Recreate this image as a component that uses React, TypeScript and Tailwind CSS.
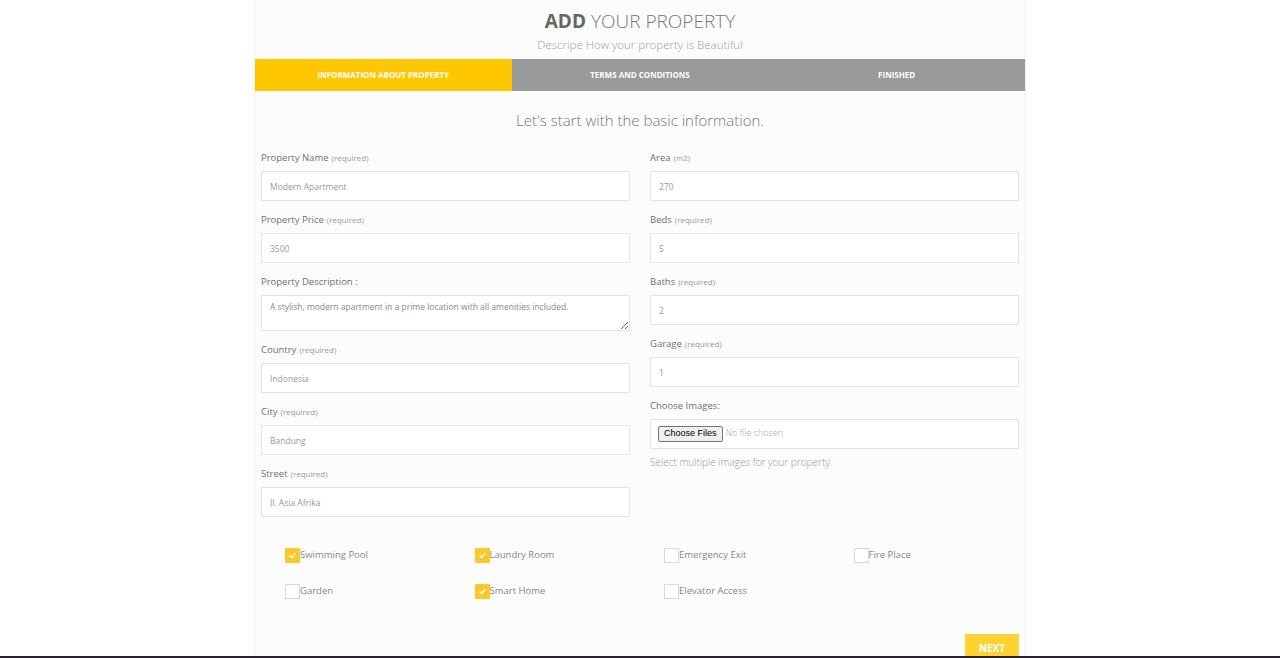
import React from "react";

const fields = {
	left: [
		{ label: "Property Name", hint: "(required)", value: "Modern Apartment" },
		{ label: "Property Price", hint: "(required)", value: "3500" },
		{ label: "Property Description :", hint: "", value: "A stylish, modern apartment in a prime location with all amenities included.", area: true },
		{ label: "Country", hint: "(required)", value: "Indonesia" },
		{ label: "City", hint: "(required)", value: "Bandung" },
		{ label: "Street", hint: "(required)", value: "Jl. Asia Afrika" },
	],
	right: [
		{ label: "Area", hint: "(m2)", value: "270" },
		{ label: "Beds", hint: "(required)", value: "5" },
		{ label: "Baths", hint: "(required)", value: "2" },
		{ label: "Garage", hint: "(required)", value: "1" },
	],
};

const features = [
	{ name: "Swimming Pool", checked: true },
	{ name: "Laundry Room", checked: true },
	{ name: "Emergency Exit", checked: false },
	{ name: "Fire Place", checked: false },
	{ name: "Garden", checked: false },
	{ name: "Smart Home", checked: true },
	{ name: "Elevator Access", checked: false },
];

type Field = { label: string; hint: string; value: string; area?: boolean };

const FormField = ({ f }: { f: Field }) => {
	return (
		<div className="flex flex-col mb-[12px]">
			<label className="h-[14px] flex items-baseline gap-[3px] text-[9.5px] leading-[14px] text-[#707070] mb-[6px]">
				{f.label} {f.hint && <span className="text-[8px] leading-[14px] text-[#999]">{f.hint}</span>}
			</label>
			{f.area ? (
				<textarea
					className="h-[36px] bg-white border border-[#e3e3e3] px-[8px] py-[5px] text-[8.5px] leading-[12px] text-[#888] outline-none"
					defaultValue={f.value}
				/>
			) : (
				<input
					className="h-[30px] bg-white border border-[#e3e3e3] px-[8px] text-[8.5px] text-[#999] outline-none"
					defaultValue={f.value}
				/>
			)}
		</div>
	);
};

const CheckBox = ({ name, checked }: { name: string; checked: boolean }) => {
	return (
		<div className="flex items-center pl-[24px] h-[15px]">
			{checked ? (
				<span className="w-[15px] h-[15px] bg-[#fdc82c] flex items-center justify-center">
					<svg width="9" height="9" viewBox="0 0 10 10" fill="none">
						<path d="M2 5.2 L4.2 7.2 L8 2.8" stroke="white" strokeWidth="1.4" strokeLinecap="round" strokeLinejoin="round" />
					</svg>
				</span>
			) : (
				<span className="w-[15px] h-[15px] bg-white border border-[#d8d8d8]" />
			)}
			<span className="text-[9.5px] text-[#888]">{name}</span>
		</div>
	);
};

export default function App() {
	return (
		<div className="min-h-screen bg-white font-['Open_Sans',sans-serif]">
			<div className="w-[772px] mx-auto bg-[#fcfcfc] border-x border-[#f0f0f0] pb-[10px]">
				<div className="pt-[7px] text-center">
					<h1 className="text-[19px] leading-[28px] text-[#777] font-light">
						<span className="font-bold text-[#666]">ADD</span> YOUR PROPERTY
					</h1>
					<p className="mt-[2px] text-[11.5px] leading-[16px] text-[#9c9c9c] font-light">
						Descripe How your property is Beautiful
					</p>
				</div>
				<div className="mt-[6px] grid grid-cols-3 h-[32px] text-white text-[8px] font-bold uppercase">
					<div className="bg-[#fec700] flex items-center justify-center">Information about property</div>
					<div className="bg-[#999999] flex items-center justify-center">Terms and conditions</div>
					<div className="bg-[#999999] flex items-center justify-center">Finished</div>
				</div>
				<h2 className="mt-[19px] mb-[21px] text-center text-[15px] leading-[20px] text-[#777] font-light">
					Let's start with the basic information.
				</h2>
				<div className="px-[6px] grid grid-cols-2 gap-x-[20px]">
					<div className="flex flex-col">
						{fields.left.map((f) => (
							<FormField key={f.label} f={f} />
						))}
					</div>
					<div className="flex flex-col">
						{fields.right.map((f) => (
							<FormField key={f.label} f={f} />
						))}
						<div className="flex flex-col">
							<label className="h-[14px] text-[9.5px] leading-[14px] text-[#707070] mb-[6px]">Choose Images:</label>
							<div className="h-[30px] bg-white border border-[#e3e3e3] px-[7px] flex items-center">
								<input
									type="file"
									multiple
									className="text-[9px] text-[#aaa] font-light file:font-['Liberation_Sans',sans-serif] file:text-[9px] file:text-black file:bg-[#efefef] file:border file:border-[#767676] file:rounded-[2px] file:px-[5px] file:py-0 file:mr-[3px]"
								/>
							</div>
							<p className="mt-[6px] text-[10px] leading-[14px] text-[#999] font-light">
								Select multiple images for your property.
							</p>
						</div>
					</div>
				</div>
				<div className="px-[6px] mt-[19px] grid grid-cols-4 gap-y-[21px]">
					{features.map((c) => (
						<CheckBox key={c.name} name={c.name} checked={c.checked} />
					))}
				</div>
				<div className="px-[6px] mt-[35px] flex justify-end">
					<button className="w-[54px] h-[28px] bg-[#fdd332] text-white text-[10px] font-bold">NEXT</button>
				</div>
			</div>
			<div className="fixed left-0 right-0 bottom-0 h-[2px] bg-[#2b2033]" />
		</div>
	);
}
